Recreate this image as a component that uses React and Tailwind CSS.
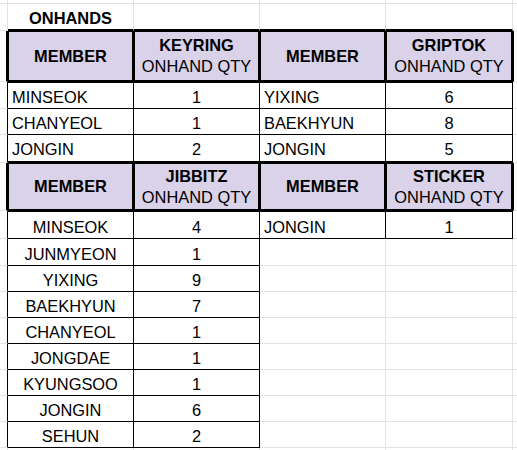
import React from 'react';

// spreadsheet model: every cell owns its right + bottom line
const WIDTHS = ['w-[8px]', 'w-[126px]', 'w-[126px]', 'w-[126px]', 'w-[127px]', 'w-[20px]'];
const LEVEL = { g: 1, d: 2, h: 3 };

const L = (text) => ({ text });
const C = (text) => ({ text, center: true });
const H = (title, sub) => ({ title, sub });

const rows = [
  { h: 'h-[4px]', t: 'gggggg', c: [] },
  { h: 'h-[27px]', t: 'gggggg', c: [null, { text: 'ONHANDS', center: true, bold: true }] },
  {
    h: 'h-[51px]',
    t: 'ghhhhg',
    c: [null, H('MEMBER'), H('KEYRING', 'ONHAND QTY'), H('MEMBER'), H('GRIPTOK', 'ONHAND QTY')],
  },
  { h: 'h-[27px]', t: 'gddddg', c: [null, L('MINSEOK'), C('1'), L('YIXING'), C('6')] },
  { h: 'h-[26px]', t: 'gddddg', c: [null, L('CHANYEOL'), C('1'), L('BAEKHYUN'), C('8')] },
  { h: 'h-[28px]', t: 'gddddg', pb: 'pb-[3px]', c: [null, L('JONGIN'), C('2'), L('JONGIN'), C('5')] },
  {
    h: 'h-[48px]',
    t: 'ghhhhg',
    c: [null, H('MEMBER'), H('JIBBITZ', 'ONHAND QTY'), H('MEMBER'), H('STICKER', 'ONHAND QTY')],
  },
  { h: 'h-[28px]', t: 'gddddg', c: [null, C('MINSEOK'), C('4'), L('JONGIN'), C('1')] },
  { h: 'h-[27px]', t: 'gddggg', c: [null, C('JUNMYEON'), C('1')] },
  { h: 'h-[26px]', t: 'gddggg', c: [null, C('YIXING'), C('9')] },
  { h: 'h-[26px]', t: 'gddggg', c: [null, C('BAEKHYUN'), C('7')] },
  { h: 'h-[26px]', t: 'gddggg', c: [null, C('CHANYEOL'), C('1')] },
  { h: 'h-[26px]', t: 'gddggg', c: [null, C('JONGDAE'), C('1')] },
  { h: 'h-[26px]', t: 'gddggg', c: [null, C('KYUNGSOO'), C('1')] },
  { h: 'h-[26px]', t: 'gddggg', c: [null, C('JONGIN'), C('6')] },
  { h: 'h-[26px]', t: 'gddggg', c: [null, C('SEHUN'), C('2')] },
  { h: 'h-[10px]', t: 'gggggg', c: [] },
];

const lvl = (r, c) => {
  const row = rows[r];
  if (!row || c < 0 || c > 5) return 0;
  return LEVEL[row.t[c]];
};

const rightCls = (n) =>
  n === 3 ? 'border-r-2 border-r-black' : n === 2 ? 'border-r border-r-black' : 'border-r border-r-[#e2e2e2]';
const bottomCls = (n) =>
  n === 3 ? 'border-b-2 border-b-black' : n === 2 ? 'border-b border-b-black' : 'border-b border-b-[#e2e2e2]';

function Cell({ r, c }) {
  const row = rows[r];
  const content = row.c[c];
  const right = Math.max(lvl(r, c), lvl(r, c + 1));
  const bottom = Math.max(lvl(r, c), lvl(r + 1, c));
  const left = Math.max(lvl(r, c), lvl(r, c - 1)) === 3 && c > 0 ? 'border-l border-l-black' : '';
  const top = Math.max(lvl(r, c), lvl(r - 1, c)) === 3 && r > 0 ? 'border-t border-t-black' : '';
  const isHead = row.t[c] === 'h';

  let inner = null;
  if (content && isHead) {
    inner = (
      <div className="flex flex-col items-center justify-center w-full h-full text-center leading-[21px]">
        <span className="font-bold">{content.title}</span>
        {content.sub && <span>{content.sub}</span>}
      </div>
    );
  } else if (content) {
    inner = (
      <div
        className={
          'flex items-end w-full h-full px-[4px] leading-[18px] whitespace-nowrap overflow-hidden ' +
          (row.pb || 'pb-[2px]') +
          (content.center ? ' justify-center' : ' justify-start') +
          (content.bold ? ' font-bold' : '')
        }
      >
        {content.text}
      </div>
    );
  }

  return (
    <div
      className={`shrink-0 h-full ${WIDTHS[c]} ${rightCls(right)} ${bottomCls(bottom)} ${left} ${top} ${
        isHead ? 'bg-[#d9d2e9]' : 'bg-white'
      }`}
    >
      {inner}
    </div>
  );
}

export default function App() {
  return (
    <div className="w-[517px] h-[450px] overflow-hidden bg-white text-black text-[16.4px] font-['Liberation_Sans',Arial,sans-serif]">
      {rows.map((row, r) => (
        <div key={r} className={`flex ${row.h}`}>
          {WIDTHS.map((_, c) => (
            <Cell key={c} r={r} c={c} />
          ))}
        </div>
      ))}
    </div>
  );
}
